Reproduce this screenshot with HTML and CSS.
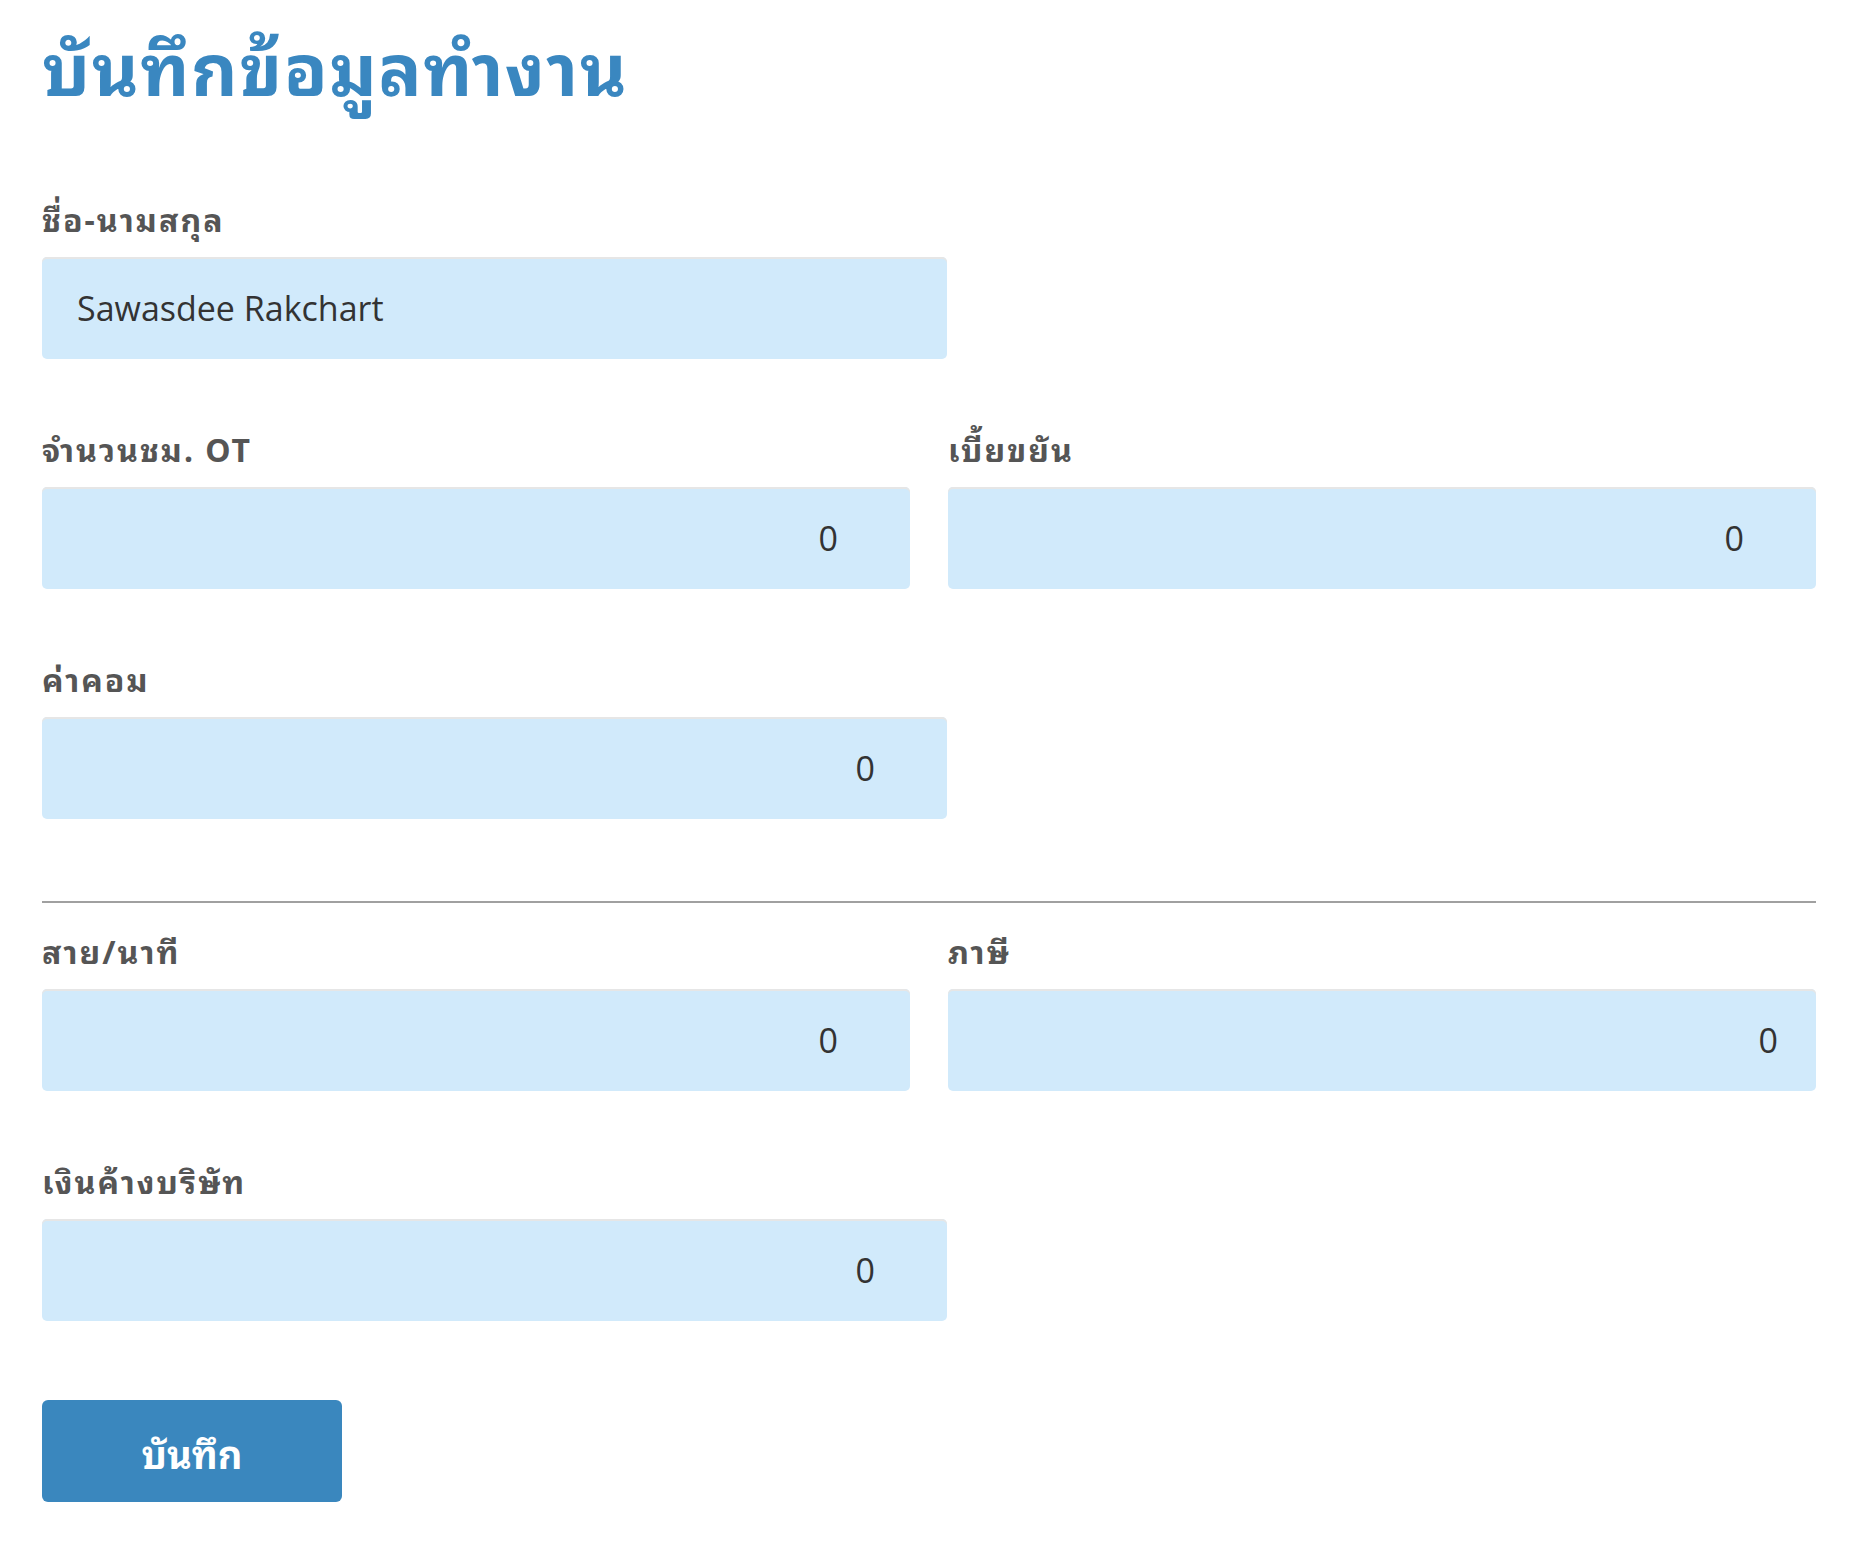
FILE: index.html
```html
<!DOCTYPE html>
<html lang="th">
<head>
  <meta charset="UTF-8">
  <meta name="viewport" content="width=device-width, initial-scale=1.0">
  <title>บันทึกข้อมูลทำงาน</title>
  <link rel="stylesheet" href="styles.css">
</head>
<body>
  <div class="container">
    <h1>บันทึกข้อมูลทำงาน</h1>

    <form id="work-form">
      <div class="field wide">
        <label for="fullname">ชื่อ-นามสกุล</label>
        <input type="text" id="fullname" class="text-left" value="Sawasdee Rakchart">
      </div>

      <div class="row">
        <div class="field">
          <label for="ot-hours">จำนวนชม. OT</label>
          <input type="text" id="ot-hours" value="0">
        </div>
        <div class="field">
          <label for="allowance">เบี้ยขยัน</label>
          <input type="text" id="allowance" value="0">
        </div>
      </div>

      <div class="field wide">
        <label for="commission">ค่าคอม</label>
        <input type="text" id="commission" value="0">
      </div>

      <hr>

      <div class="row">
        <div class="field">
          <label for="late">สาย/นาที</label>
          <input type="text" id="late" value="0">
        </div>
        <div class="field">
          <label for="tax">ภาษี</label>
          <input type="text" id="tax" class="tight" value="0">
        </div>
      </div>

      <div class="field wide">
        <label for="debt">เงินค้างบริษัท</label>
        <input type="text" id="debt" value="0">
      </div>

      <button type="submit">บันทึก</button>
    </form>
  </div>
</body>
</html>
```

FILE: styles.css
```css
body {
  margin: 0;
  padding: 0;
  background: #fff;
  color: #555;
  font-family: "Noto Sans Thai Looped", "Noto Sans Thai", Tahoma, "Open Sans", sans-serif;
}
.container {
  padding: 0 44px 40px 42px;
}
h1 {
  margin: 0;
  padding-top: 14px;
  font-size: 72px;
  line-height: 100px;
  letter-spacing: 1.5px;
  font-weight: bold;
  color: #3a87c0;
  margin-bottom: 84px;
}
.row {
  display: grid;
  grid-template-columns: 1fr 1fr;
  column-gap: 38px;
}
.field {
  margin-bottom: 69px;
}
.field.wide {
  width: calc(50% + 18px);
}
.field label {
  display: block;
  font-size: 32px;
  line-height: 40px;
  letter-spacing: 2px;
  font-weight: bold;
  color: #555;
  margin-bottom: 19px;
}
.field input {
  display: block;
  box-sizing: border-box;
  width: 100%;
  height: 102px;
  padding: 0 72px 0 35px;
  border: none;
  border-radius: 5px;
  background: #d1eafb;
  box-shadow: inset 0 2px 0 #e6e6e6;
  font-family: "Open Sans", sans-serif;
  font-size: 34px;
  color: #333;
  text-align: right;
  outline: none;
}
.field input.text-left {
  text-align: left;
}
.field input.tight {
  padding-right: 38px;
}
hr {
  margin: 82px 0 27px;
  border: none;
  border-top: 2px solid #a0a0a0;
}
button {
  display: block;
  margin-top: 79px;
  width: 300px;
  height: 102px;
  border: none;
  border-radius: 6px;
  background: #3a87be;
  color: #fff;
  font-family: "Noto Sans Thai Looped", "Noto Sans Thai", Tahoma, sans-serif;
  font-size: 38px;
  font-weight: bold;
  cursor: pointer;
}
button:hover {
  background: #2f76aa;
}
```
